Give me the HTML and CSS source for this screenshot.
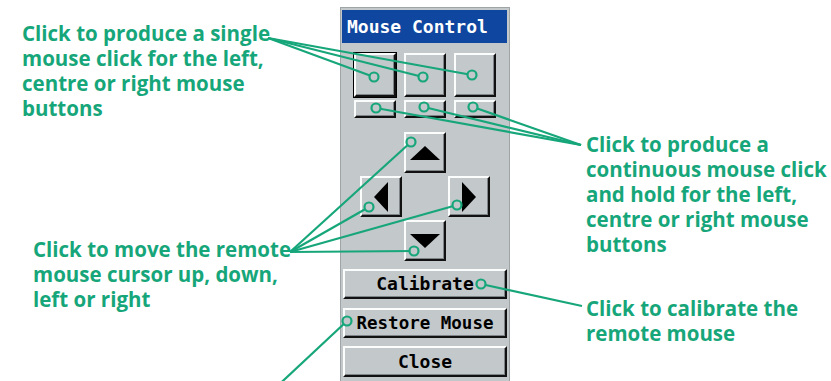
FILE: index.html
```html
<!DOCTYPE html>
<html lang="en">
<head>
  <meta charset="UTF-8" />
  <title>Mouse Control</title>
  <link rel="stylesheet" href="styles.css">
</head>
<body>
  <div class="page">
    <div class="notes notes-left">
      <p class="note note-single">Click to produce a single<br>mouse click for the left,<br>centre or right mouse<br>buttons</p>
      <p class="note note-move">Click to move the remote<br>mouse cursor up, down,<br>left or right</p>
    </div>

    <div class="panel">
      <div class="title">Mouse Control</div>

      <div class="mouse-buttons">
        <button class="btn btn-click is-default"></button>
        <button class="btn btn-click"></button>
        <button class="btn btn-click"></button>
        <button class="btn btn-hold"></button>
        <button class="btn btn-hold"></button>
        <button class="btn btn-hold"></button>
      </div>

      <div class="pad">
        <button class="btn btn-arrow up"><span class="tri tri-up"></span></button>
        <button class="btn btn-arrow left"><span class="tri tri-left"></span></button>
        <button class="btn btn-arrow right"><span class="tri tri-right"></span></button>
        <button class="btn btn-arrow down"><span class="tri tri-down"></span></button>
      </div>

      <button class="btn btn-wide btn-calibrate">Calibrate</button>
      <button class="btn btn-wide btn-restore">Restore Mouse</button>
      <button class="btn btn-wide btn-close">Close</button>
    </div>

    <div class="notes notes-right">
      <p class="note note-hold">Click to produce a<br>continuous mouse click<br>and hold for the left,<br>centre or right mouse<br>buttons</p>
      <p class="note note-calibrate">Click to calibrate the<br>remote mouse</p>
    </div>

    <!-- callout lines -->
    <svg class="callouts" width="831" height="381" viewBox="0 0 831 381">
      <g class="lines">
        <line x1="268" y1="38" x2="374" y2="77"/>
        <line x1="268" y1="38" x2="423" y2="77"/>
        <line x1="268" y1="38" x2="472" y2="75"/>

        <line x1="581" y1="145" x2="376" y2="108"/>
        <line x1="581" y1="145" x2="424" y2="107"/>
        <line x1="581" y1="145" x2="473" y2="107"/>

        <line x1="290" y1="252" x2="411" y2="142"/>
        <line x1="290" y1="252" x2="369" y2="207"/>
        <line x1="290" y1="252" x2="457" y2="205"/>
        <line x1="290" y1="252" x2="414" y2="251"/>

        <line x1="582" y1="306" x2="481" y2="284"/>
        <line x1="347" y1="321" x2="270" y2="393"/>
      </g>
      <g class="dots">
        <circle cx="374" cy="77" r="4.5"/>
        <circle cx="423" cy="77" r="4.5"/>
        <circle cx="472" cy="75" r="4.5"/>
        <circle cx="376" cy="108" r="4.5"/>
        <circle cx="424" cy="107" r="4.5"/>
        <circle cx="473" cy="107" r="4.5"/>
        <circle cx="411" cy="142" r="4.5"/>
        <circle cx="369" cy="207" r="4.5"/>
        <circle cx="457" cy="205" r="4.5"/>
        <circle cx="414" cy="251" r="4.5"/>
        <circle cx="481" cy="284" r="4.5"/>
        <circle cx="347" cy="321" r="4.5"/>
      </g>
    </svg>
  </div>
</body>
</html>
```

FILE: styles.css
```css
* {
  box-sizing: border-box;
}

body {
  margin: 0;
  background: #fff;
}

.page {
  position: relative;
  width: 831px;
  height: 381px;
  overflow: hidden;
  display: flex;
  align-items: flex-start;
}

/* green notes */
.notes {
  display: flex;
  flex-direction: column;
}

.notes-left {
  width: 340px;
  padding: 21px 0 0 22px;
}

.notes-right {
  padding-left: 76px;
}

.note {
  margin: 0;
  font-family: "Open Sans", "Liberation Sans", sans-serif;
  font-weight: 700;
  font-size: 20.5px;
  line-height: 25px;
  color: #16a67a;
  white-space: nowrap;
}

.note-move {
  margin: 116px 0 0 11px;
}

.note-hold {
  margin-top: 132px;
}

.note-calibrate {
  margin-top: 39px;
}

/* dialog */
.panel {
  width: 170px;
  height: 380px;
  margin-top: 7px;
  flex-shrink: 0;
  background: #c3c8cb;
  border: 1px solid #9fa4a7;
  display: flex;
  flex-direction: column;
  align-items: center;
}

.title {
  align-self: stretch;
  height: 33px;
  margin: 2px 2px 0 1px;
  padding-left: 5px;
  background: #0f47a0;
  color: #fff;
  font-family: "DejaVu Sans Mono", monospace;
  font-weight: 700;
  font-size: 18px;
  line-height: 33px;
}

.btn {
  margin: 0;
  padding: 0;
  background: #c3c8cb;
  border: 2px solid;
  border-color: #fbfcfc #111 #111 #fbfcfc;
  box-shadow: inset -1px -1px 0 #7e8488;
  font-family: "DejaVu Sans Mono", monospace;
  font-weight: 700;
  font-size: 18px;
  color: #000;
}

.mouse-buttons {
  display: grid;
  grid-template-columns: repeat(3, 42px);
  grid-template-rows: 44px 18px;
  column-gap: 8px;
  row-gap: 3px;
  margin-top: 10px;
}

.is-default {
  outline: 1px solid #000;
}

.pad {
  display: grid;
  grid-template-columns: repeat(3, 42px);
  grid-template-rows: repeat(3, 41px);
  column-gap: 2px;
  row-gap: 3px;
  margin-top: 14px;
}

.btn-arrow {
  display: flex;
  align-items: center;
  justify-content: center;
}

.up { grid-area: 1 / 2; }
.left { grid-area: 2 / 1; }
.right { grid-area: 2 / 3; }
.down { grid-area: 3 / 2; }

.tri {
  width: 0;
  height: 0;
  border: 0 solid transparent;
}

.tri-up {
  border-width: 0 15px 14px;
  border-bottom-color: #000;
}

.tri-down {
  border-width: 14px 15px 0;
  border-top-color: #000;
}

.tri-left {
  border-width: 15px 14px 15px 0;
  border-right-color: #000;
}

.tri-right {
  border-width: 15px 0 15px 14px;
  border-left-color: #000;
}

.btn-wide {
  align-self: stretch;
  height: 30px;
  margin: 8px 2px 0;
  line-height: 26px;
  white-space: nowrap;
}

.btn-restore {
  margin-top: 9px;
  font-size: 17.5px;
}

.btn-close {
  height: 31px;
}

/* callout overlay */
.callouts {
  position: absolute;
  top: 0;
  left: 0;
  pointer-events: none;
}

.callouts line {
  stroke: #16a67a;
  stroke-width: 2.2;
}

.callouts circle {
  fill: #c3c8cb;
  stroke: #16a67a;
  stroke-width: 2.2;
}
```
